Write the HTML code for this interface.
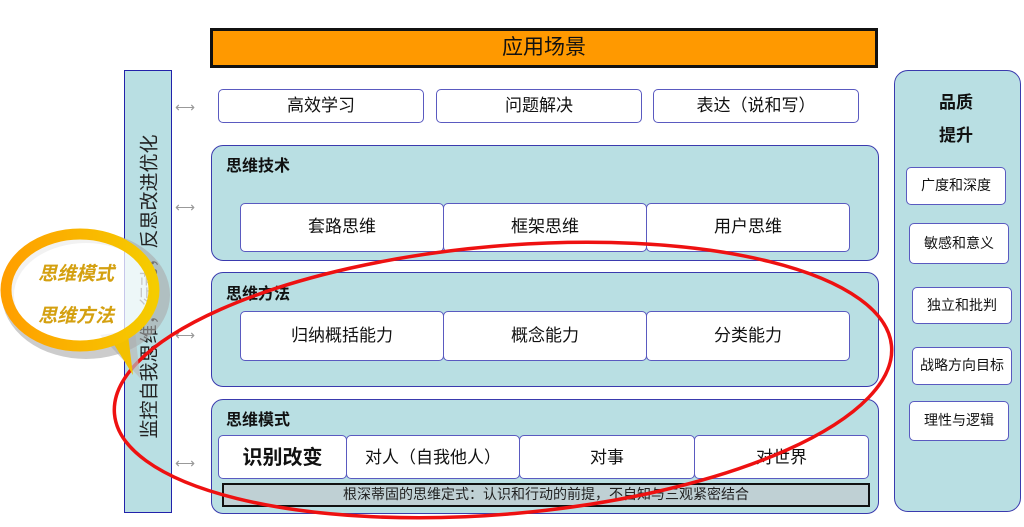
<!DOCTYPE html>
<html><head><meta charset="utf-8"><style>
body{margin:0;width:1024px;height:527px;background:#fff;position:relative;overflow:hidden;font-family:"Liberation Sans","Noto Sans CJK SC",sans-serif;color:#111}
.a{position:absolute;box-sizing:border-box}
.box{position:absolute;box-sizing:border-box;background:#fff;border:1.5px solid #5a5ac0;border-radius:5px;display:flex;align-items:center;justify-content:center;font-size:17px;padding-bottom:6px}
.panel{position:absolute;box-sizing:border-box;background:#b9dfe3;border:1.5px solid #3a3aae;border-radius:12px}
.t{position:absolute;font-weight:bold;font-size:16px}
.arr{position:absolute;color:#999;font-size:14px}
.rb{font-size:14px;padding-bottom:2px}
</style></head><body>
<div class="a" style="left:210px;top:28px;width:668px;height:40px;background:#ff9900;border:3px solid #111;display:flex;align-items:center;justify-content:center;font-size:21px;padding-bottom:4px">应用场景</div>

<div class="a" style="left:124px;top:70px;width:48px;height:443px;background:#b9dfe3;border:1.5px solid #2222aa"></div>
<div class="a" style="left:124px;top:65px;width:48px;height:443px;display:flex;align-items:center;justify-content:center"><div style="transform:rotate(-90deg);white-space:nowrap;font-size:19px;color:#222">监控自我思维，行动，反思改进优化</div></div>

<div class="arr" style="left:175px;top:99px">⟷</div>
<div class="arr" style="left:175px;top:199px">⟷</div>
<div class="arr" style="left:175px;top:327px">⟷</div>
<div class="arr" style="left:175px;top:455px">⟷</div>

<div class="box" style="left:218px;top:89px;width:206px;height:34px">高效学习</div>
<div class="box" style="left:436px;top:89px;width:206px;height:34px">问题解决</div>
<div class="box" style="left:653px;top:89px;width:206px;height:34px">表达（说和写）</div>

<div class="panel" style="left:211px;top:145px;width:668px;height:116px"></div>
<div class="t" style="left:226px;top:152px">思维技术</div>
<div class="box" style="left:240px;top:203px;width:204px;height:49px">套路思维</div>
<div class="box" style="left:443px;top:203px;width:204px;height:49px">框架思维</div>
<div class="box" style="left:646px;top:203px;width:204px;height:49px">用户思维</div>

<div class="panel" style="left:211px;top:272px;width:668px;height:115px"></div>
<div class="t" style="left:226px;top:280px">思维方法</div>
<div class="box" style="left:240px;top:311px;width:204px;height:50px">归纳概括能力</div>
<div class="box" style="left:443px;top:311px;width:204px;height:50px">概念能力</div>
<div class="box" style="left:646px;top:311px;width:204px;height:50px">分类能力</div>

<div class="panel" style="left:211px;top:399px;width:668px;height:115px"></div>
<div class="t" style="left:226px;top:406px">思维模式</div>
<div class="box" style="left:218px;top:435px;width:129px;height:44px;font-weight:bold;font-size:20px;padding-bottom:4px">识别改变</div>
<div class="box" style="left:346px;top:435px;width:174px;height:44px;padding-bottom:4px">对人（自我他人）</div>
<div class="box" style="left:519px;top:435px;width:176px;height:44px;padding-bottom:4px">对事</div>
<div class="box" style="left:694px;top:435px;width:175px;height:44px;padding-bottom:4px">对世界</div>
<div class="a" style="left:222px;top:483px;width:648px;height:24px;background:#bfd0d4;border:2.5px solid #111;display:flex;align-items:center;justify-content:center;font-size:14px;color:#222;padding-bottom:2px">根深蒂固的思维定式：认识和行动的前提，不自知与三观紧密结合</div>

<div class="panel" style="left:894px;top:70px;width:127px;height:442px;border-radius:14px"></div>
<div class="t" style="left:939px;top:88px;font-size:17px">品质</div>
<div class="t" style="left:939px;top:121px;font-size:17px">提升</div>
<div class="box rb" style="left:906px;top:167px;width:100px;height:38px">广度和深度</div>
<div class="box rb" style="left:909px;top:223px;width:100px;height:41px">敏感和意义</div>
<div class="box rb" style="left:912px;top:287px;width:100px;height:37px">独立和批判</div>
<div class="box rb" style="left:912px;top:347px;width:100px;height:38px">战略方向目标</div>
<div class="box rb" style="left:909px;top:401px;width:100px;height:40px">理性与逻辑</div>

<svg class="a" style="left:0;top:0" width="1024" height="527">
<defs><linearGradient id="g" x1="0" x2="1"><stop offset="0" stop-color="#ff9f00"/><stop offset="1" stop-color="#f5cc00"/></linearGradient></defs>
<ellipse cx="503" cy="380" rx="390" ry="134" transform="rotate(-5 503 380)" fill="none" stroke="#ee1111" stroke-width="3.5"/>
<path d="M100 335 L140 378 L135 330 Z" fill="#bbb" opacity="0.7"/>
<ellipse cx="86" cy="295" rx="78" ry="58" fill="none" stroke="#aaa" stroke-width="12" opacity="0.6"/>
<path d="M110 338 L133 375 L128 335 Z" fill="#f3c000"/>
<ellipse cx="80" cy="290" rx="74" ry="56" fill="rgba(255,255,255,0.75)" stroke="url(#g)" stroke-width="11"/>
<text x="38" y="280" font-size="19" font-weight="bold" font-style="italic" fill="#d4a010" font-family="Liberation Sans,Noto Sans CJK SC,sans-serif">思维模式</text>
<text x="38" y="322" font-size="19" font-weight="bold" font-style="italic" fill="#d4a010" font-family="Liberation Sans,Noto Sans CJK SC,sans-serif">思维方法</text>
</svg>
</body></html>
